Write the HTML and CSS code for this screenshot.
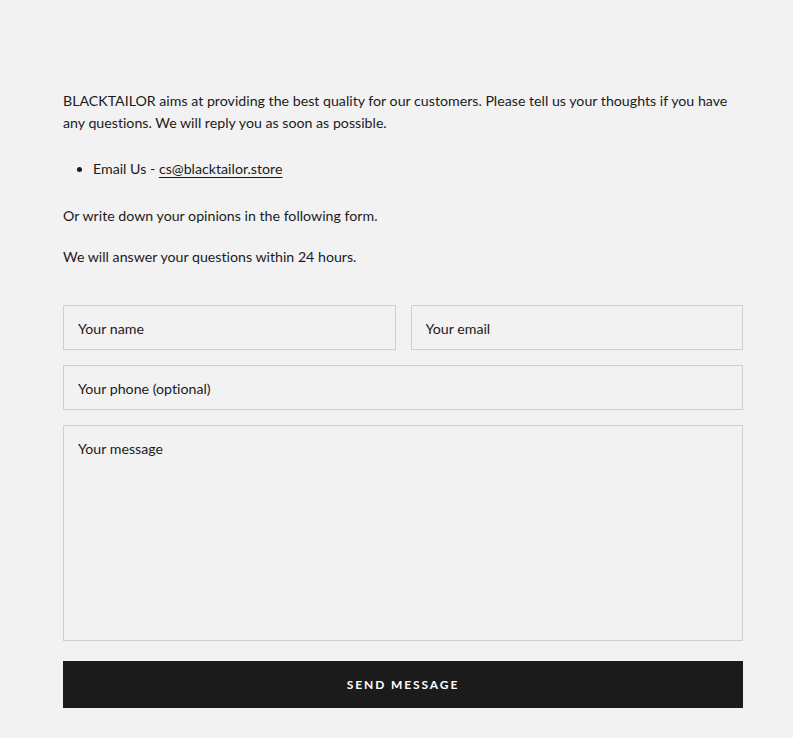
FILE: index.html
```html
<!DOCTYPE html>
<html lang="en">
<head>
<meta charset="UTF-8" />
<meta name="viewport" content="width=device-width, initial-scale=1" />
<title>Contact</title>
<link rel="stylesheet" href="styles.css">
</head>
<body>

<main class="contato">
  <div class="texto">
    <p>BLACKTAILOR aims at providing the best quality for our customers. Please tell us your thoughts if you have any questions. We will reply you as soon as possible.</p>
    <ul>
      <li>Email Us - <a href="#">cs@blacktailor.store</a></li>
    </ul>
    <p>Or write down your opinions in the following form.</p>
    <p>We will answer your questions within 24 hours.</p>
  </div>

  <form class="formulario">
    <div class="linha">
      <input type="text" placeholder="Your name" />
      <input type="email" placeholder="Your email" />
    </div>
    <input type="tel" placeholder="Your phone (optional)" />
    <textarea placeholder="Your message"></textarea>
    <button type="button" class="enviar">Send message</button>
  </form>
</main>

</body>
</html>
```

FILE: styles.css
```css
/* Base */
body, html {
  margin: 0; padding: 0;
  background: #f2f2f2;
  color: #1c1b1b;
  font-family: 'Lato', 'Noto Sans', sans-serif;
  font-size: 14.2px;
  font-variant-ligatures: none;
}

.contato {
  width: 680px;
  margin: 0 0 0 63px;
  padding: 90px 0 30px;
  box-sizing: border-box;
}

.texto p {
  margin: 0 0 19px;
  line-height: 22px;
}
.texto ul {
  margin: 24px 0 25px;
  padding-left: 30px;
  line-height: 22px;
}
.texto a {
  color: inherit;
  text-decoration: underline;
  text-underline-offset: 3px;
  text-decoration-thickness: 1px;
}

.formulario {
  margin-top: 37px;
  display: flex;
  flex-direction: column;
  gap: 15px;
}
.linha {
  display: flex;
  gap: 15px;
}
.linha input { flex: 1; min-width: 0; }

input, textarea {
  font-family: inherit;
  font-size: 14.2px;
  font-variant-ligatures: none;
  color: #1c1b1b;
  background: transparent;
  border: 1px solid #cfcfcf;
  border-radius: 0;
  padding: 1px 14px 0;
  height: 45px;
  box-sizing: border-box;
  outline: none;
}
textarea {
  height: 216px;
  padding: 13px 14px;
  resize: none;
  line-height: 20px;
}
input::placeholder, textarea::placeholder {
  color: #1c1b1b;
  opacity: 1;
}

.enviar {
  margin-top: 5px;
  height: 47px;
  background: #1c1b1b;
  color: #fff;
  border: none;
  font-family: inherit;
  font-weight: 700;
  font-size: 12px;
  letter-spacing: 1.9px;
  text-transform: uppercase;
  cursor: pointer;
}
```
